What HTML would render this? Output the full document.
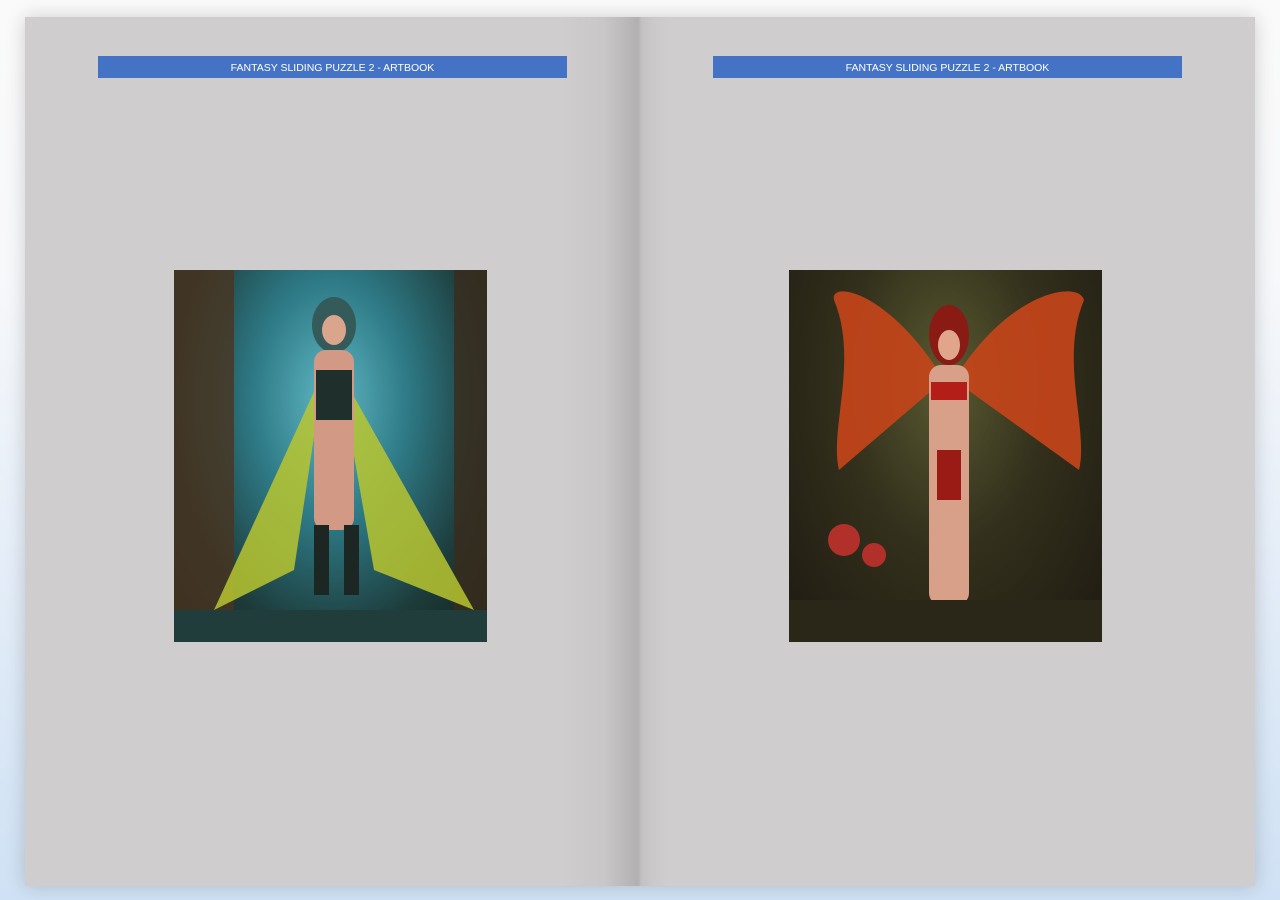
<!DOCTYPE html>
<html><head><meta charset="utf-8"><style>
body{margin:0;width:1280px;height:900px;overflow:hidden;position:relative;font-family:"Liberation Sans",sans-serif;
background:linear-gradient(180deg,#fafafa 0%,#f7f8fa 30%,#e6eef8 60%,#cfe1f4 100%);}
.book{position:absolute;left:25px;top:17px;width:1230px;height:869px;background:#cfcdce;box-shadow:0 0 18px rgba(0,0,0,.18);}
.gut{position:absolute;left:535px;top:0;width:110px;height:869px;background:linear-gradient(90deg,rgba(0,0,0,0) 0%,rgba(0,0,0,.03) 40%,rgba(0,0,0,.14) 71%,rgba(0,0,0,.06) 74%,rgba(0,0,0,.02) 85%,rgba(0,0,0,0) 100%);}
.hdr{position:absolute;top:39px;width:469px;height:22px;background:#4472c4;color:#fff;font-size:10.5px;line-height:24px;text-align:center;font-family:"Liberation Sans",sans-serif;}
.img{position:absolute;top:253px;width:313px;height:372px;overflow:hidden;}
</style></head><body>
<div class="book">
<div class="gut"></div>
<div class="hdr" style="left:73px">FANTASY SLIDING PUZZLE 2 - ARTBOOK</div>
<div class="hdr" style="left:688px">FANTASY SLIDING PUZZLE 2 - ARTBOOK</div>
<div class="img" style="left:149px;background:radial-gradient(ellipse at 50% 35%,#5fb8c4 0%,#2e7a86 35%,#1d3b3a 70%,#14201c 100%);">
<svg width="313" height="372">
<rect x="0" y="0" width="60" height="372" fill="#4a3520" opacity=".8"/>
<rect x="280" y="0" width="33" height="372" fill="#3a2c1c" opacity=".8"/>
<path d="M150 100 L40 340 L120 300 Z" fill="#b9c530" opacity=".85"/>
<path d="M165 100 L300 340 L200 300 Z" fill="#b9c530" opacity=".85"/>
<ellipse cx="160" cy="55" rx="22" ry="28" fill="#355a5a"/>
<ellipse cx="160" cy="60" rx="12" ry="15" fill="#d9a58c"/>
<rect x="140" y="80" width="40" height="180" rx="12" fill="#d29a84"/>
<rect x="142" y="100" width="36" height="50" fill="#1f2f2c"/>
<rect x="140" y="255" width="15" height="70" fill="#1c2622"/>
<rect x="170" y="255" width="15" height="70" fill="#1c2622"/>
<rect x="0" y="340" width="313" height="32" fill="#203d3c"/>
</svg></div>
<div class="img" style="left:764px;background:radial-gradient(ellipse at 50% 30%,#5a5a30 0%,#33301c 45%,#1e1a12 100%);">
<svg width="313" height="372">
<path d="M155 110 C100 20,40 10,45 30 C70 90,40 160,50 200 Z" fill="#c8451a" opacity=".9"/>
<path d="M165 110 C220 20,290 10,295 30 C270 90,300 160,290 200 Z" fill="#c8451a" opacity=".9"/>
<ellipse cx="160" cy="65" rx="20" ry="30" fill="#8a1a14"/>
<ellipse cx="160" cy="75" rx="11" ry="15" fill="#e0a58a"/>
<rect x="140" y="95" width="40" height="240" rx="12" fill="#d8a088"/>
<rect x="142" y="112" width="36" height="18" fill="#b31e18"/>
<rect x="148" y="180" width="24" height="50" fill="#9a1a16"/>
<circle cx="55" cy="270" r="16" fill="#b2302a"/><circle cx="85" cy="285" r="12" fill="#b2302a"/>
<rect x="0" y="330" width="313" height="42" fill="#2a2618"/>
</svg></div>
</div>
</body></html>
